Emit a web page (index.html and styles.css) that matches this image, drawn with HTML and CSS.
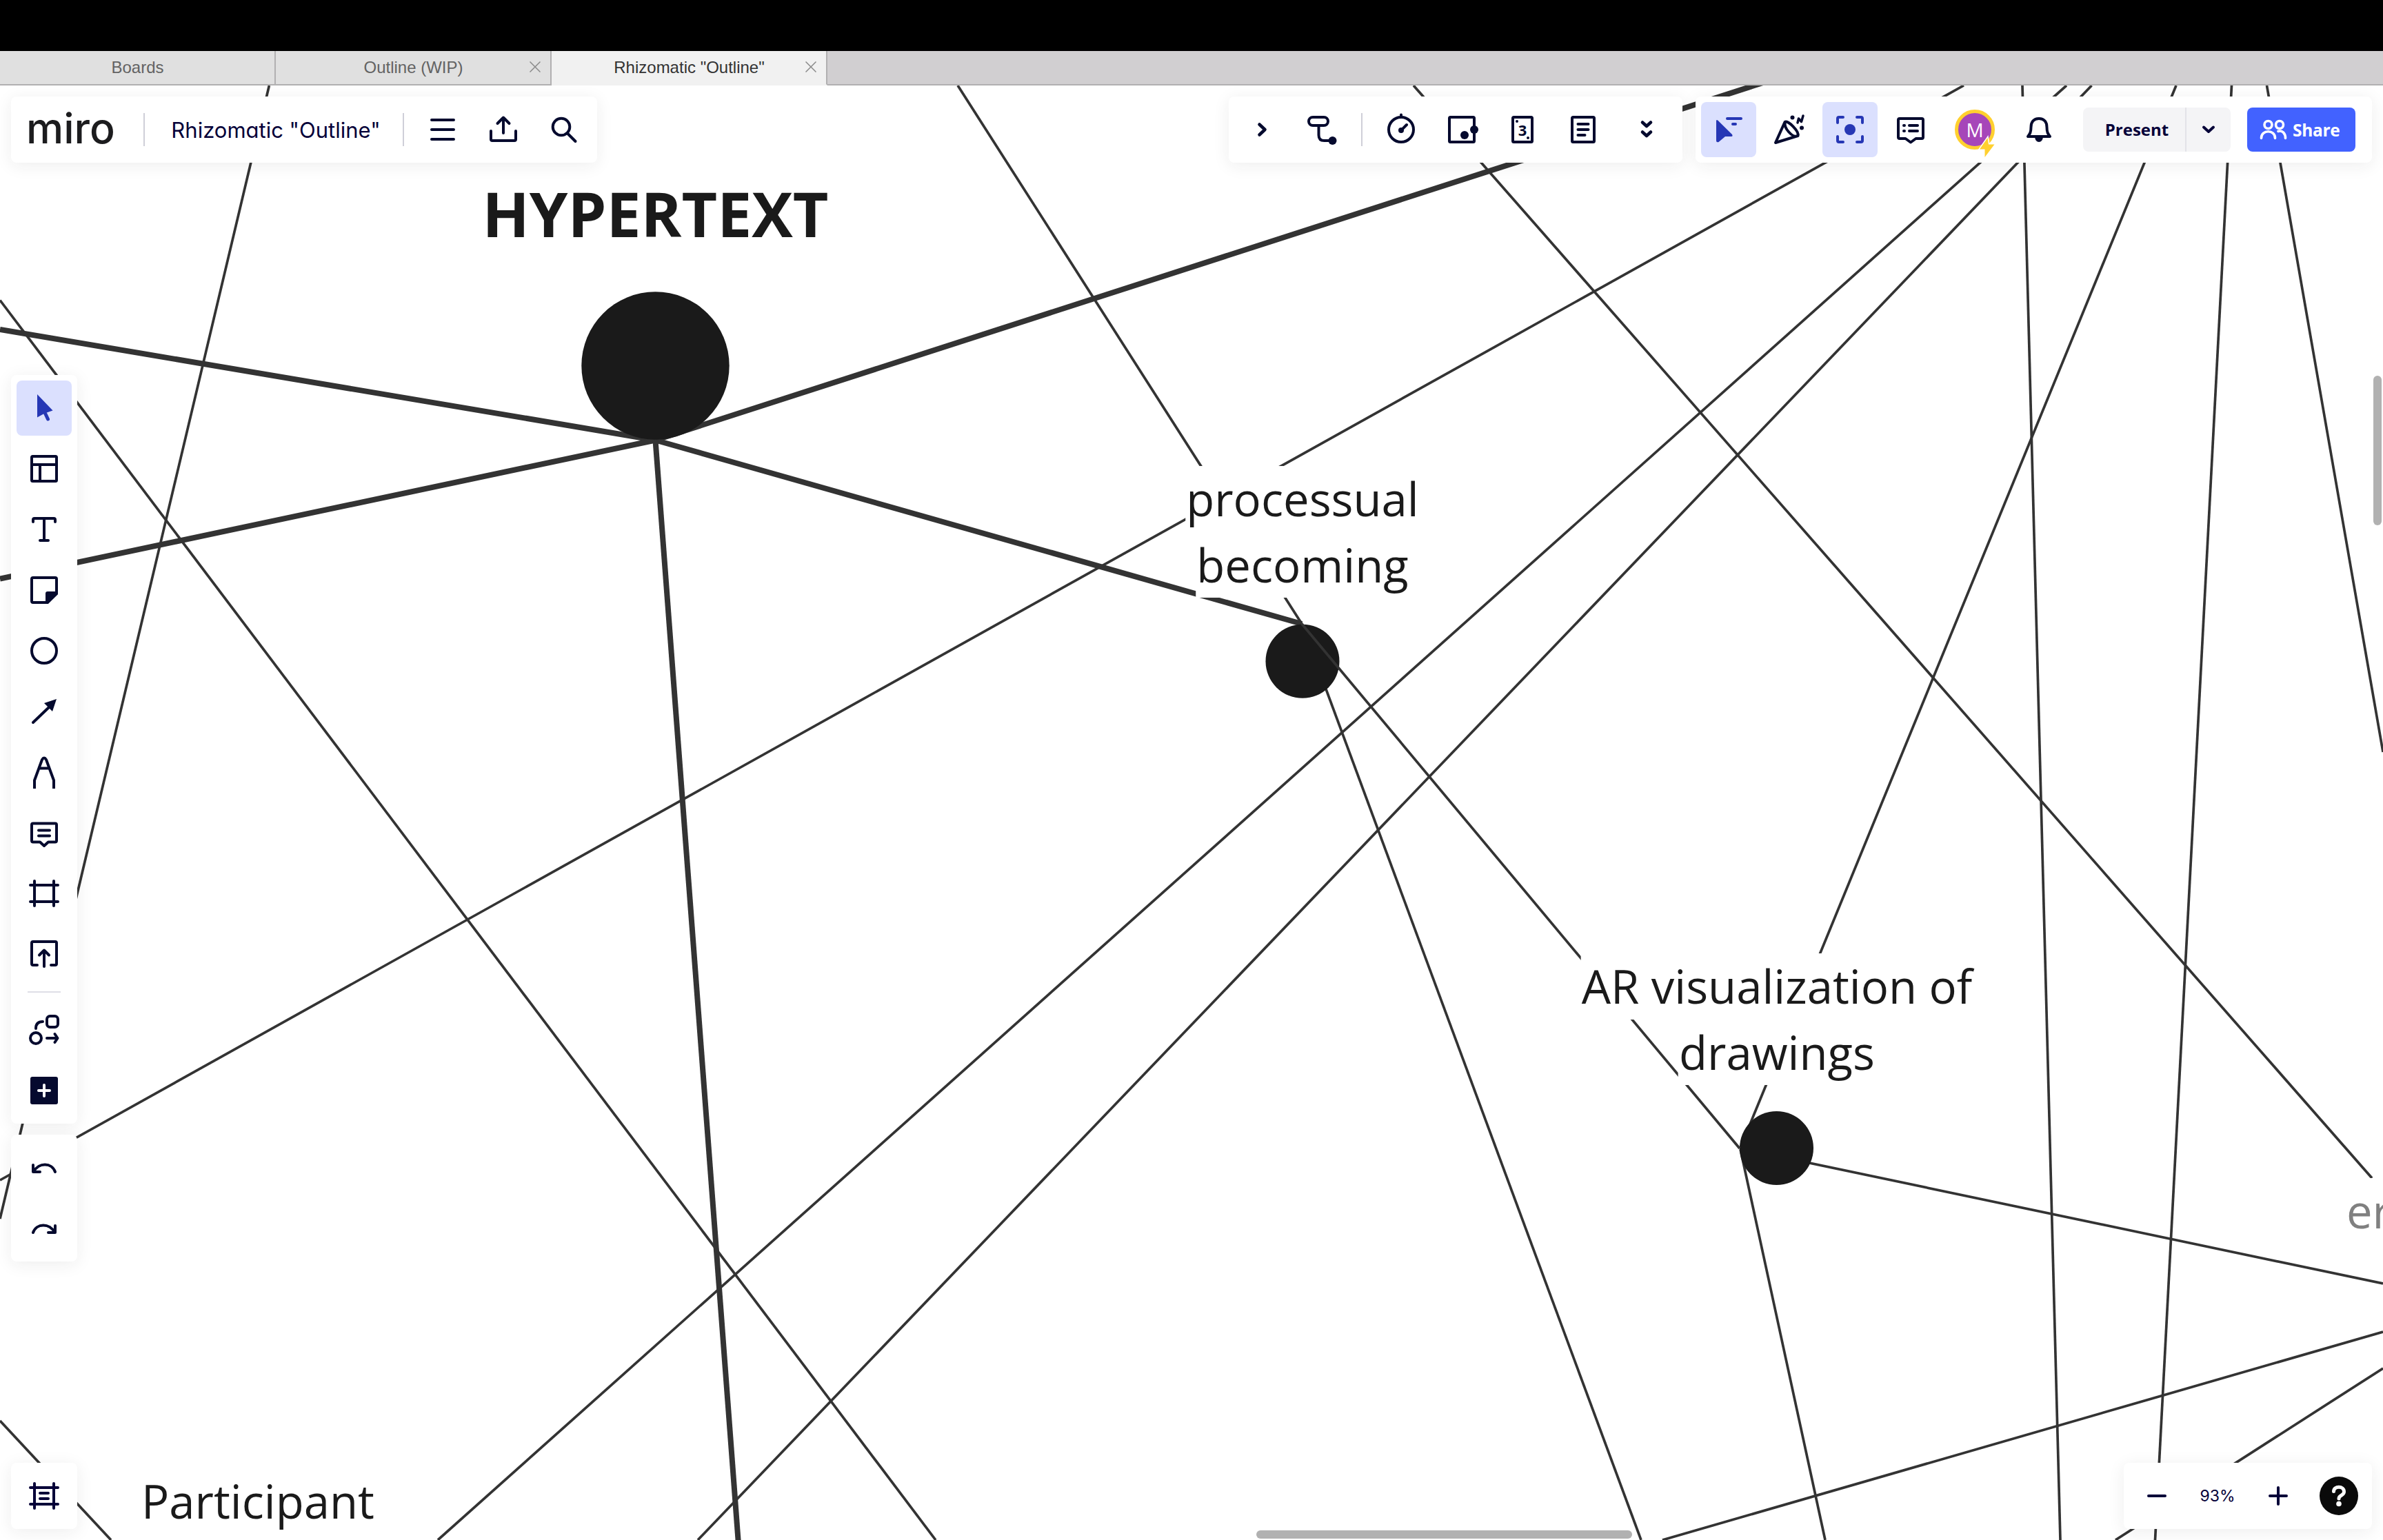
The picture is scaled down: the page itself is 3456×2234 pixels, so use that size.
FILE: index.html
```html
<!DOCTYPE html>
<html lang="en">
<head>
  <meta charset="UTF-8">
  <title>Rhizomatic "Outline"</title>
  <meta name="viewport" content="width=device-width, initial-scale=1.0">
  <link rel="stylesheet" href="styles.css">
</head>

<body>
  <div class="notch"></div>
  <nav class="tabs">
    <div class="tab">Boards</div>
    <div class="tab">Outline (WIP)
      <svg class="close" viewBox="0 0 16 16"><path d="M.5.5l15 15M15.500.5l-15 15"/></svg>
    </div>
    <div class="tab active">Rhizomatic "Outline"
      <svg class="close" viewBox="0 0 16 16"><path d="M.5.5l15 15M15.500.5l-15 15"/></svg>
    </div>
  </nav>

  <main class="board">
    <svg class="links" viewBox="0 124 3456 2110">
      <g class="thick">
        <path d="M0 478L950.500 638.500"/>
        <path d="M0 839.500L950.500 638.500"/>
        <path d="M950.500 638.500L2600 106"/>
        <path d="M950.500 638.500L1888 905"/>
        <path d="M950.500 638.500L1071 2240"/>
      </g>
      <g class="thin">
        <path d="M390.400 124L0 1768"/>
        <path d="M0 435.500L1357 2234"/>
        <path d="M0 1712L2848 124"/>
        <path d="M1389 124L1888 905"/>
        <path d="M1888 905L2380 2234"/>
        <path d="M2050 124L3440 1709"/>
        <path d="M2997 124L635 2234"/>
        <path d="M3033.500 124L1012 2234"/>
        <path d="M2933 124L2988 2234"/>
        <path d="M3156 124L2524 1665"/>
        <path d="M3236.500 124L3125.500 2234"/>
        <path d="M3287.500 124L3456 1091"/>
        <path d="M2524 1666L3456 1862"/>
        <path d="M2524 1667L2647 2234"/>
        <path d="M3456 1932L2411 2234"/>
        <path d="M3456 1985L3068 2234"/>
        <path d="M0 2061L161 2234"/>
      </g>
      <g class="dots">
        <circle cx="950.500" cy="530.500" r="107.200"/>
        <circle cx="1889" cy="959.300" r="53.500"/>
        <circle cx="2576.500" cy="1665.500" r="53.500"/>
      </g>
      <path class="over" d="M1888 905L2523 1666"/>
    </svg>

    <div class="label title-label">HYPERTEXT</div>
    <div class="label processual"><span>processual</span><span>becoming</span></div>
    <div class="label drawings"><span>AR visualization of</span><span>drawings</span></div>
    <div class="label participant"><span>Participant</span></div>
    <div class="label faded"><span>er</span></div>

    <header class="panel board-bar">
      <div class="logo">miro</div>
      <div class="board-name">Rhizomatic "Outline"</div>
      <button><svg viewBox="0 0 48 48"><path d="M8 10h32M8 24h32M8 38h32"/></svg></button>
      <button><svg viewBox="0 0 48 48"><path d="M6 26v12q0 2 2 2h32q2 0 2-2V26M24 29V7M15.500 15L24 6.500 32.500 15"/></svg></button>
      <button><svg viewBox="0 0 48 48"><circle cx="20" cy="20" r="12.300"/><path d="M29 29.500L40.500 41"/></svg></button>
    </header>

    <div class="panel tools-bar">
      <button><svg viewBox="0 0 48 48"><path class="bold" d="M20.500 16.500l8 7.500-8 7.500"/></svg></button>
      <button><svg viewBox="0 0 48 48"><rect x="4" y="6" width="28" height="12" rx="6"/><path d="M18.500 18v14q0 8 8 8h8"/><circle class="solid" cx="38.500" cy="40" r="6"/></svg></button>
      <i class="sep"></i>
      <button><svg viewBox="0 0 48 48"><circle cx="24" cy="24" r="18"/><path d="M24 2.500v3M25 24l7-7"/><circle class="solid" cx="24" cy="25" r="4"/></svg></button>
      <button><svg viewBox="0 0 48 48"><rect x="6" y="6" width="36" height="36" rx="1.500"/><circle class="solid" cx="42" cy="24" r="6"/><circle class="solid" cx="28" cy="32" r="6"/></svg></button>
      <button><svg viewBox="0 0 48 48"><rect x="10" y="6" width="28" height="36" rx="1.500"/><text x="24" y="33" class="card-num">3</text><circle class="solid" cx="16" cy="12" r="2"/><circle class="solid" cx="32" cy="36" r="2"/></svg></button>
      <button><svg viewBox="0 0 48 48"><rect x="8" y="6" width="32" height="36" rx="1.500"/><path d="M16.500 16h15M16.500 24h15M16.500 32h10"/></svg></button>
      <button class="more"><svg viewBox="0 0 48 48"><path class="bold" d="M18 13.500l6 5.500 6-5.500M18 27.500l6 5.500 6-5.500"/></svg></button>
    </div>

    <div class="panel user-bar">
      <button class="on"><svg viewBox="0 0 48 48"><path class="solid" d="M6 11.500q0-2.500 2.200-1L29 31q1.500 3-1 3h-9l-9.500 8Q6 43 6 40z"/><path d="M22 8h20M30 16h4"/></svg></button>
      <button><svg viewBox="0 0 48 48"><path d="M4 43L17.500 13c5-3 21 14 19 20zM18 13c-3 8 11 24 18 20"/><path class="spark" d="M36 14l1.500-6 4 4.500L44 4"/><circle class="solid" cx="28.500" cy="6.500" r="3"/><circle class="solid" cx="42" cy="21.500" r="3"/></svg></button>
      <button class="on"><svg viewBox="0 0 48 48"><path d="M6 14V8q0-2 2-2h6M34 6h6q2 0 2 2v6M42 34v6q0 2-2 2h-6M14 42H8q-2 0-2-2v-6"/><circle class="solid" cx="24" cy="24" r="8"/></svg></button>
      <button><svg viewBox="0 0 48 48"><path d="M8 8h32q2 0 2 2v25q0 2-2 2h-8.500L24 42.500 16.500 37H8q-2 0-2-2V10q0-2 2-2zM22 18h12M22 26h12M14 18h1M14 26h1"/></svg></button>
      <div class="avatar-slot">
        <div class="avatar">M
          <svg class="bolt" viewBox="0 0 26 32"><path d="M13.500 2L2 18.500h7.500L9.500 30 23.500 11.500h-8.500z"/></svg>
        </div>
      </div>
      <button><svg viewBox="0 0 48 48"><path d="M24 8c-8 0-11.500 5.500-11.500 12.500 0 8-2 10-4.500 13.500h32c-2.500-3.500-4.500-5.500-4.500-13.500C35.500 13.500 32 8 24 8z"/><path class="solid" d="M18 35h12q-1 7-6 7t-6-7z"/></svg></button>
      <div class="present">
        <span>Present</span>
        <div class="present-more"><svg viewBox="0 0 20 14"><path d="M3 3.500l7 6.500 7-6.500"/></svg></div>
      </div>
      <div class="share">
        <svg viewBox="0 0 40 30"><circle cx="12.500" cy="8" r="5.500"/><circle cx="29" cy="8" r="5.500"/><path d="M2.500 27.500c0-13 20-13 20 0M27 17.500c6-2 10.500 3 10.500 10"/></svg>
        <span>Share</span>
      </div>
    </div>

    <aside class="side">
      <div class="panel stack">
        <button class="on"><svg viewBox="0 0 48 48"><path class="solid" d="M14 4L36.500 27.500 26.500 31 24 32 14 37.500z"/><path class="tail" d="M25.500 31.500l4 8.500"/></svg></button>
        <button><svg viewBox="0 0 48 48"><rect x="6" y="6" width="36" height="36" rx="1.500"/><path d="M6 18h36M18 18v24"/></svg></button>
        <button><svg viewBox="0 0 48 48"><path d="M8 13V10q0-2 2-2h28q2 0 2 2v3M24 8v32M18 40h12"/></svg></button>
        <button><svg viewBox="0 0 48 48"><path d="M8 6h32q2 0 2 2v21L29 42H8q-2 0-2-2V8q0-2 2-2z"/><path class="solid" d="M26 43V29q0-3 3-3h15v4L30 43z"/></svg></button>
        <button><svg viewBox="0 0 48 48"><circle cx="24" cy="24" r="18"/></svg></button>
        <button><svg viewBox="0 0 48 48"><path d="M8 40l23-22"/><path class="solid" d="M42 6L24 12l12 12z"/></svg></button>
        <button><svg viewBox="0 0 48 48"><path class="flat" d="M10 48V36L21 6q3-5 6 0l11 30v12M16 18.500h16"/></svg></button>
        <button><svg viewBox="0 0 48 48"><path d="M8 10.500h32q2 0 2 2v23q0 2-2 2h-10L24 43l-6-5.500H8q-2 0-2-2v-23q0-2 2-2zM16 20.500h16M16 28.500h16"/></svg></button>
        <button><svg viewBox="0 0 48 48"><path d="M4 12h40M4 36h40M10 6v36M38 6v36"/></svg></button>
        <button><svg viewBox="0 0 48 48"><path d="M14 40H8q-2 0-2-2V8q0-2 2-2h32q2 0 2 2v30q0 2-2 2h-6M24 42V19M17 25.500L24 18.500l7 7"/></svg></button>
        <i class="rule"></i>
        <button><svg viewBox="0 0 48 48"><rect x="28" y="4" width="16" height="16" rx="4.500"/><circle cx="12" cy="36" r="8"/><path d="M12 22q0-10 10-10M28 36h14M39.500 30l4 6-4 6"/></svg></button>
        <button><svg viewBox="0 0 48 48"><rect class="solid" x="4" y="4" width="40" height="40" rx="3"/><path class="inv" d="M16 24h16M24 16v16"/></svg></button>
      </div>
      <div class="panel stack">
        <button><svg viewBox="0 0 48 48"><path d="M8 20v10h10M9 29.500C16 16 35 16 40 30"/></svg></button>
        <button><svg viewBox="0 0 48 48"><path d="M40 20v10H30M39 29.500C32 16 13 16 8 30"/></svg></button>
      </div>
    </aside>

    <div class="panel frames-btn">
      <button><svg viewBox="0 0 48 48"><path d="M4 12h40M4 36h40M10 6v36M38 6v36M18 20h12M18 28h12"/></svg></button>
    </div>

    <div class="panel zoom-bar">
      <svg viewBox="0 0 28 28"><path d="M2 14h24"/></svg>
      <span>93%</span>
      <svg viewBox="0 0 28 28"><path d="M2 14h24M14 2v24"/></svg>
      <div class="help"><svg viewBox="0 0 24 32"><path d="M4.500 9.500c0-8.500 15-8.500 15 .5 0 6-7.500 4.500-7.500 10"/><circle cx="12" cy="27.500" r="3.800"/></svg></div>
    </div>

    <div class="scroll-y"></div>
    <div class="scroll-x"></div>
  </main>
</body>
</html>
```
FILE: styles.css
```css
:root {
  --ink: #050a2e;
  --ink-2: #050038;
  --node: #1a1a1a;
  --line: #333;
  --on-bg: #dbe0fe;
  --on: #2637b5;
  --blue: #4262ff;
}
* { box-sizing: border-box; }
html, body {
  height: 100%;
}
body {
  margin: 0;
  display: flex;
  flex-direction: column;
  overflow: hidden;
  background: #fff;
  font-family: "Open Sans", "Noto Sans", sans-serif;
}
.notch {
  flex: 0 0 74px;
  background: #000;
}

/* window tabs */
.tabs {
  flex: 0 0 50px;
  display: flex;
  background: #d1cfd1;
  font: 24px "Liberation Sans", Arial, sans-serif;
  box-shadow: inset 0 -2px #b1b0b1;
}
.tab {
  position: relative;
  width: 400px;
  display: flex;
  align-items: center;
  justify-content: center;
  padding-left: 1px;
  background: #e0e0e0;
  color: #636363;
  border-right: 2px solid #b1b0b1;
  border-bottom: 2px solid #b1b0b1;
}
.tab.active {
  background: #f1f1f1;
  color: #333;
  border-bottom-color: #f1f1f1;
}
.close {
  position: absolute;
  right: 14px; top: 15px;
  width: 16px; height: 16px;
  fill: none;
  stroke: #8a8a8a;
  stroke-width: 1.5;
}

/* canvas */
.board {
  position: relative;
  flex: 1;
  overflow: hidden;
}
.links {
  display: block;
  width: 3456px;
  height: 2110px;
  fill: none;
  stroke: var(--line);
}
.thin, .over { stroke-width: 3.700; }
.thick { stroke-width: 8; }
.dots {
  fill: var(--node);
  stroke: none;
}
.label {
  position: absolute;
  display: flex;
  flex-direction: column;
  align-items: center;
  transform: translateX(-50%);
  white-space: nowrap;
  font-size: 67px;
  line-height: 95.7px;
  color: var(--node);
}
.label span {
  padding: 0 1px;
  background: #fff;
}
.title-label {
  left: 950.500px; top: 125px;
  font-size: 89.300px;
  font-weight: 700;
  line-height: 122px;
}
.processual { left: 1889px; top: 552px; }
.drawings { left: 2577px; top: 1259px; }
.participant { left: 374px; top: 2006px; }
.faded {
  left: 3402px; top: 1585px;
  transform: none;
  color: #808080;
}

/* floating panels */
.panel {
  position: absolute;
  display: flex;
  align-items: center;
  padding: 8px;
  background: #fff;
  border-radius: 8px;
  box-shadow: 0 4px 24px rgba(34, 36, 40, .08);
}
button {
  flex: none;
  width: 80px; height: 80px;
  padding: 0;
  border: none;
  border-radius: 8px;
  background: transparent;
  color: var(--ink);
  display: flex;
  align-items: center;
  justify-content: center;
}
button svg {
  width: 48px; height: 48px;
  overflow: visible;
  fill: none;
  stroke: currentColor;
  stroke-width: 4;
  stroke-linecap: round;
  stroke-linejoin: round;
}
button.on {
  background: var(--on-bg);
  color: var(--on);
}
.solid {
  fill: currentColor;
  stroke: none;
}
.bold { stroke-width: 4.600; }
.flat { stroke-linecap: butt; }
.tail { stroke-width: 5; }
.spark { stroke-width: 3.500; }
.inv { stroke: #fff; }
.card-num {
  fill: currentColor;
  stroke: none;
  font: 700 22px "Open Sans", sans-serif;
  text-anchor: middle;
}
.board-bar, .tools-bar, .user-bar {
  top: 16px;
  height: 96px;
  gap: 8px;
}
.board-bar {
  left: 16px;
  width: 850px;
  padding-left: 22px;
}
.logo {
  width: 170px;
  margin-right: -8px;
  padding-bottom: 5px;
  font: 500 61px/60px Inter, sans-serif;
  color: #1c1c1e;
}
.board-name {
  width: 378px; height: 48px;
  margin-right: 8px;
  padding-left: 6px;
  display: flex;
  align-items: center;
  justify-content: center;
  border-left: 2px solid #cfcfd8;
  border-right: 2px solid #cfcfd8;
  font-family: Inter, sans-serif;
  font-feature-settings: "cv11";
  font-size: 31px;
  color: var(--ink-2);
}
.tools-bar {
  left: 1782px;
  width: 658px;
}
.sep {
  width: 2px; height: 48px;
  margin: 0 8px;
  background: #cfcfd8;
}
.more { width: 88px; }
.user-bar {
  left: 2459px;
  width: 981px;
}
.avatar-slot {
  width: 90px;
  display: flex;
  justify-content: center;
}
.avatar {
  position: relative;
  width: 58px; height: 58px;
  border: 5px solid #ffd02f;
  border-radius: 50%;
  background: #a646b9;
  color: #fff;
  font-size: 28px;
  display: flex;
  align-items: center;
  justify-content: center;
}
.bolt {
  position: absolute;
  left: 29px; top: 34px;
  width: 26px; height: 32px;
  overflow: visible;
  fill: #ffd02f;
  stroke: #fff;
  stroke-width: 3;
  paint-order: stroke;
}
.present {
  display: flex;
  width: 214px; height: 64px;
  margin: 0 16px;
  border-radius: 8px;
  background: #f4f4f6;
  color: var(--ink-2);
  font-size: 24px;
  font-weight: 700;
  line-height: 64px;
}
.present span {
  width: 148px;
  padding-left: 8px;
  text-align: center;
}
.present-more {
  flex: 1;
  display: flex;
  align-items: center;
  justify-content: center;
  border-left: 2px solid #e3e3e8;
}
.present-more svg {
  width: 20px; height: 14px;
  fill: none;
  stroke: currentColor;
  stroke-width: 4;
  stroke-linecap: round;
  stroke-linejoin: round;
}
.share {
  display: flex;
  align-items: center;
  gap: 8px;
  width: 157px; height: 64px;
  padding-left: 18px;
  border-radius: 8px;
  background: var(--blue);
  color: #fff;
  font-size: 24.500px;
  font-weight: 700;
}
.share svg {
  width: 40px; height: 30px;
  fill: none;
  stroke: #fff;
  stroke-width: 3.600;
  stroke-linecap: round;
}
.share span { letter-spacing: -.3px; }

/* left side */
.side {
  position: absolute;
  left: 16px; top: 420px;
  display: flex;
  flex-direction: column;
  gap: 16px;
}
.stack {
  position: static;
  flex-direction: column;
  gap: 8px;
}
.rule {
  width: 48px; height: 2px;
  margin: 6px 0;
  background: #dedee6;
}
.frames-btn {
  left: 16px; bottom: 16px;
}
.frames-btn button { color: var(--ink-2); }

.zoom-bar {
  right: 16px; bottom: 16px;
  width: 360px; height: 96px;
  padding: 0 20px 0 34px;
  color: var(--ink-2);
  font: 23px Inter, sans-serif;
}
.zoom-bar > svg {
  width: 28px; height: 28px;
  fill: none;
  stroke: currentColor;
  stroke-width: 4;
  stroke-linecap: round;
}
.zoom-bar > span {
  flex: 1;
  text-align: center;
}
.help {
  width: 56px; height: 56px;
  margin-left: 46px;
  border-radius: 50%;
  background: #0a0a0a;
  display: flex;
  align-items: center;
  justify-content: center;
}
.help svg {
  width: 24px; height: 32px;
  fill: none;
  stroke: #fff;
  stroke-width: 5;
  stroke-linecap: round;
}
.help circle {
  fill: #fff;
  stroke: none;
}

.scroll-y, .scroll-x {
  position: absolute;
  border-radius: 6px;
  background: #b1b1b1;
}
.scroll-y {
  right: 2px; top: 421px;
  width: 12px; height: 217px;
}
.scroll-x {
  left: 1822px; bottom: 2px;
  width: 545px; height: 12px;
}
```
